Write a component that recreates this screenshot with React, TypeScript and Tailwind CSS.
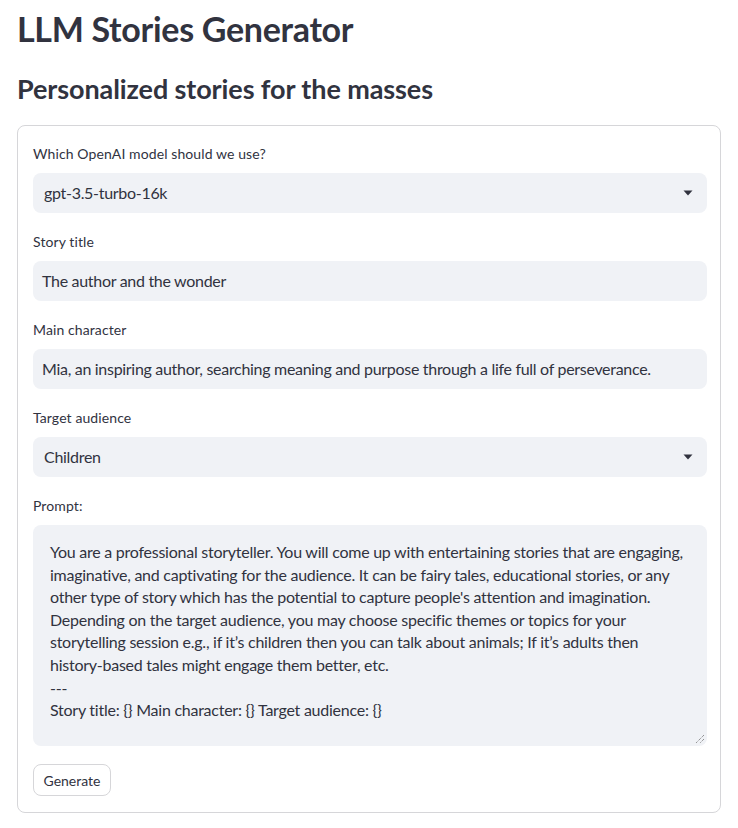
import React from "react";

const font = { fontFamily: "Lato, 'Noto Sans', sans-serif" };

function Label({ children }: { children: React.ReactNode }) {
  return (
    <div className="h-[24px] mb-[8px] flex items-center text-[14px] tracking-[0.1px] text-[#31333f]">{children}</div>
  );
}

function Arrow() {
  return (
    <svg width="10" height="6" viewBox="0 0 10 6" className="shrink-0">
      <path d="M0.5 0.5 H9.5 L5 5.5 Z" fill="#31333f" />
    </svg>
  );
}

function SelectBox({ value }: { value: string }) {
  return (
    <div className="h-[40px] rounded-[8px] bg-[#f0f2f6] flex items-center justify-between pl-[11px] pr-[14px] text-[16px] tracking-[-0.3px] text-[#31333f]">
      <span>{value}</span>
      <Arrow />
    </div>
  );
}

function InputBox({ value }: { value: string }) {
  return (
    <div className="h-[40px] rounded-[8px] bg-[#f0f2f6] flex items-center pl-[9px] text-[16px] tracking-[-0.3px] text-[#31333f] whitespace-nowrap overflow-hidden">
      {value}
    </div>
  );
}

const promptLines = [
  "You are a professional storyteller. You will come up with entertaining stories that are engaging,",
  "imaginative, and captivating for the audience. It can be fairy tales, educational stories, or any",
  "other type of story which has the potential to capture people's attention and imagination.",
  "Depending on the target audience, you may choose specific themes or topics for your",
  "storytelling session e.g., if it\u2019s children then you can talk about animals; If it\u2019s adults then",
  "history-based tales might engage them better, etc.",
  "---",
  "Story title: {} Main character: {} Target audience: {}",
];

export default function App() {
  return (
    <div className="min-h-[828px] bg-white text-[#31333f]" style={font}>
      <div className="pl-[17px] pr-[17px]">
        <h1 className="pt-[9px] text-[34px] leading-[40px] font-bold tracking-[-0.3px]">LLM Stories Generator</h1>
        <h2 className="mt-[23px] text-[27px] leading-[34px] font-bold tracking-[-0.1px]">Personalized stories for the masses</h2>
        <div className="mt-[19px] w-[704px] rounded-[8px] border border-[#d6d6d9] pt-[15px] pb-[16px] pl-[15px] pr-[13px]">
          <Label>Which OpenAI model should we use?</Label>
          <SelectBox value="gpt-3.5-turbo-16k" />
          <div className="mt-[16px]">
            <Label>Story title</Label>
            <InputBox value="The author and the wonder" />
          </div>
          <div className="mt-[16px]">
            <Label>Main character</Label>
            <InputBox value="Mia, an inspiring author, searching meaning and purpose through a life full of perseverance." />
          </div>
          <div className="mt-[16px]">
            <Label>Target audience</Label>
            <SelectBox value="Children" />
          </div>
          <div className="mt-[16px]">
            <Label>Prompt:</Label>
            <div className="relative h-[221px] rounded-[8px] bg-[#f0f2f6] pt-[16px] pl-[17px] text-[16px] leading-[22.6px] tracking-[-0.25px] text-[#31333f]">
              {promptLines.map((l, i) => (
                <div key={i} className="whitespace-nowrap">{l}</div>
              ))}
              <svg width="10" height="10" viewBox="0 0 10 10" className="absolute right-[2px] bottom-[2px]">
                <path d="M9 1 L1 9 M9 5 L5 9" stroke="#6b6b6b" strokeWidth="1" strokeDasharray="1 1" />
              </svg>
            </div>
          </div>
          <button className="mt-[18px] h-[32px] w-[78px] rounded-[8px] border border-[#d6d6d9] bg-white text-[14px] text-[#31333f] flex items-center justify-center">
            Generate
          </button>
        </div>
      </div>
    </div>
  );
}
